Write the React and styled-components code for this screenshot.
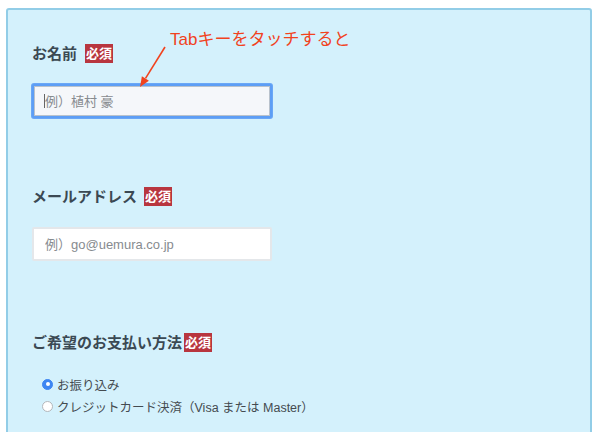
import React from "react";
import styled, { createGlobalStyle } from "styled-components";

const FONT = `"Liberation Sans", "Noto Sans CJK JP", "Noto Sans", sans-serif`;

const Global = createGlobalStyle`
  html, body { margin: 0; padding: 0; overflow: hidden; background: #fff; }
  body { font-family: ${FONT}; }
`;

const Page = styled.div`
  position: relative;
  width: 599px;
  height: 432px;
  overflow: hidden;
  padding: 8px 7px 0 6px;
  box-sizing: border-box;
`;

const Panel = styled.div`
  background: #d4f1fc;
  border: 2px solid #92cde7;
  border-radius: 3px;
  height: 440px;
  padding: 34px 24px 0;
  box-sizing: border-box;
`;

const Field = styled.section`
  display: flex;
  flex-direction: column;
  align-items: flex-start;
  gap: 21px;
  margin-top: ${(p) => p.$top || 0}px;
`;

const LabelRow = styled.div`
  display: flex;
  align-items: center;
  gap: ${(p) => p.$gap}px;
  height: 19px;
`;

const LabelText = styled.span`
  font-size: 15px;
  font-weight: 700;
  color: #3b4953;
  line-height: 19px;
`;

const Badge = styled.span`
  display: inline-block;
  background: #b8363f;
  color: #fff;
  font-size: 13px;
  font-weight: 700;
  line-height: 19px;
  height: 19px;
  padding: 0 1px;
`;

const InputBox = styled.div`
  position: relative;
  width: 240px;
  height: 34px;
`;

const TextInput = styled.input`
  width: 100%;
  height: 100%;
  box-sizing: border-box;
  margin: 0;
  padding: 0 0 0 11px;
  font-family: ${FONT};
  font-size: 13px;
  outline: none;
  border-radius: 2px;
  background: ${(p) => (p.$focused ? "#f5f7fa" : "#ffffff")};
  border: 2px solid ${(p) => (p.$focused ? "#5d9ef5" : "#e4e7ea")};
  box-shadow: ${(p) =>
    p.$focused ? "0 0 0 1px #6aa7f6, inset 0 0 0 1px #b9c2cc" : "none"};
  &::placeholder {
    color: #878b8f;
  }
`;

const Caret = styled.span`
  position: absolute;
  left: 12px;
  top: 10px;
  width: 1px;
  height: 14px;
  background: #666;
`;

const RadioList = styled.div`
  display: flex;
  flex-direction: column;
  padding-left: 10px;
`;

const RadioRow = styled.label`
  display: flex;
  align-items: center;
  gap: 4px;
  height: 22px;
  font-size: 12.5px;
  color: #444b50;
`;

const RadioDot = styled.span`
  width: 11px;
  height: 11px;
  border-radius: 50%;
  box-sizing: border-box;
  flex: none;
  background: ${(p) => (p.$checked ? "#3d86f2" : "#fff")};
  border: 1px solid ${(p) => (p.$checked ? "#3d86f2" : "#b3b7bb")};
  display: flex;
  align-items: center;
  justify-content: center;
  &::after {
    content: "";
    display: ${(p) => (p.$checked ? "block" : "none")};
    width: 4px;
    height: 4px;
    border-radius: 50%;
    background: #fff;
  }
`;

const Note = styled.div`
  position: absolute;
  left: 170px;
  top: 30px;
  font-size: 17px;
  line-height: 20px;
  color: #f1431e;
  white-space: nowrap;
`;

const ArrowSvg = styled.svg`
  position: absolute;
  left: 130px;
  top: 40px;
`;

function Label({ text, gap }) {
  return (
    <LabelRow $gap={gap}>
      <LabelText>{text}</LabelText>
      <Badge>必須</Badge>
    </LabelRow>
  );
}

export default function App() {
  return (
    <>
      <Global />
      <Page>
        <Panel>
          <Field>
            <Label text="お名前" gap={8} />
            <InputBox>
              <TextInput $focused readOnly placeholder="例）植村 豪" />
              <Caret />
            </InputBox>
          </Field>
          <Field $top={69}>
            <Label text="メールアドレス" gap={7} />
            <InputBox>
              <TextInput readOnly placeholder="例）go@uemura.co.jp" />
            </InputBox>
          </Field>
          <Field $top={72}>
            <Label text="ご希望のお支払い方法" gap={2} />
            <RadioList>
              <RadioRow>
                <RadioDot $checked />
                お振り込み
              </RadioRow>
              <RadioRow>
                <RadioDot />
                クレジットカード決済（Visa または Master）
              </RadioRow>
            </RadioList>
          </Field>
        </Panel>
        <Note>Tabキーをタッチすると</Note>
        <ArrowSvg width="45" height="55" viewBox="0 0 45 55">
          <line x1="35" y1="7" x2="15.5" y2="38.3" stroke="#f1431e" strokeWidth="1.6" />
          <polygon points="10,47 18.9,40.7 11.9,36.3" fill="#f1431e" />
        </ArrowSvg>
      </Page>
    </>
  );
}
